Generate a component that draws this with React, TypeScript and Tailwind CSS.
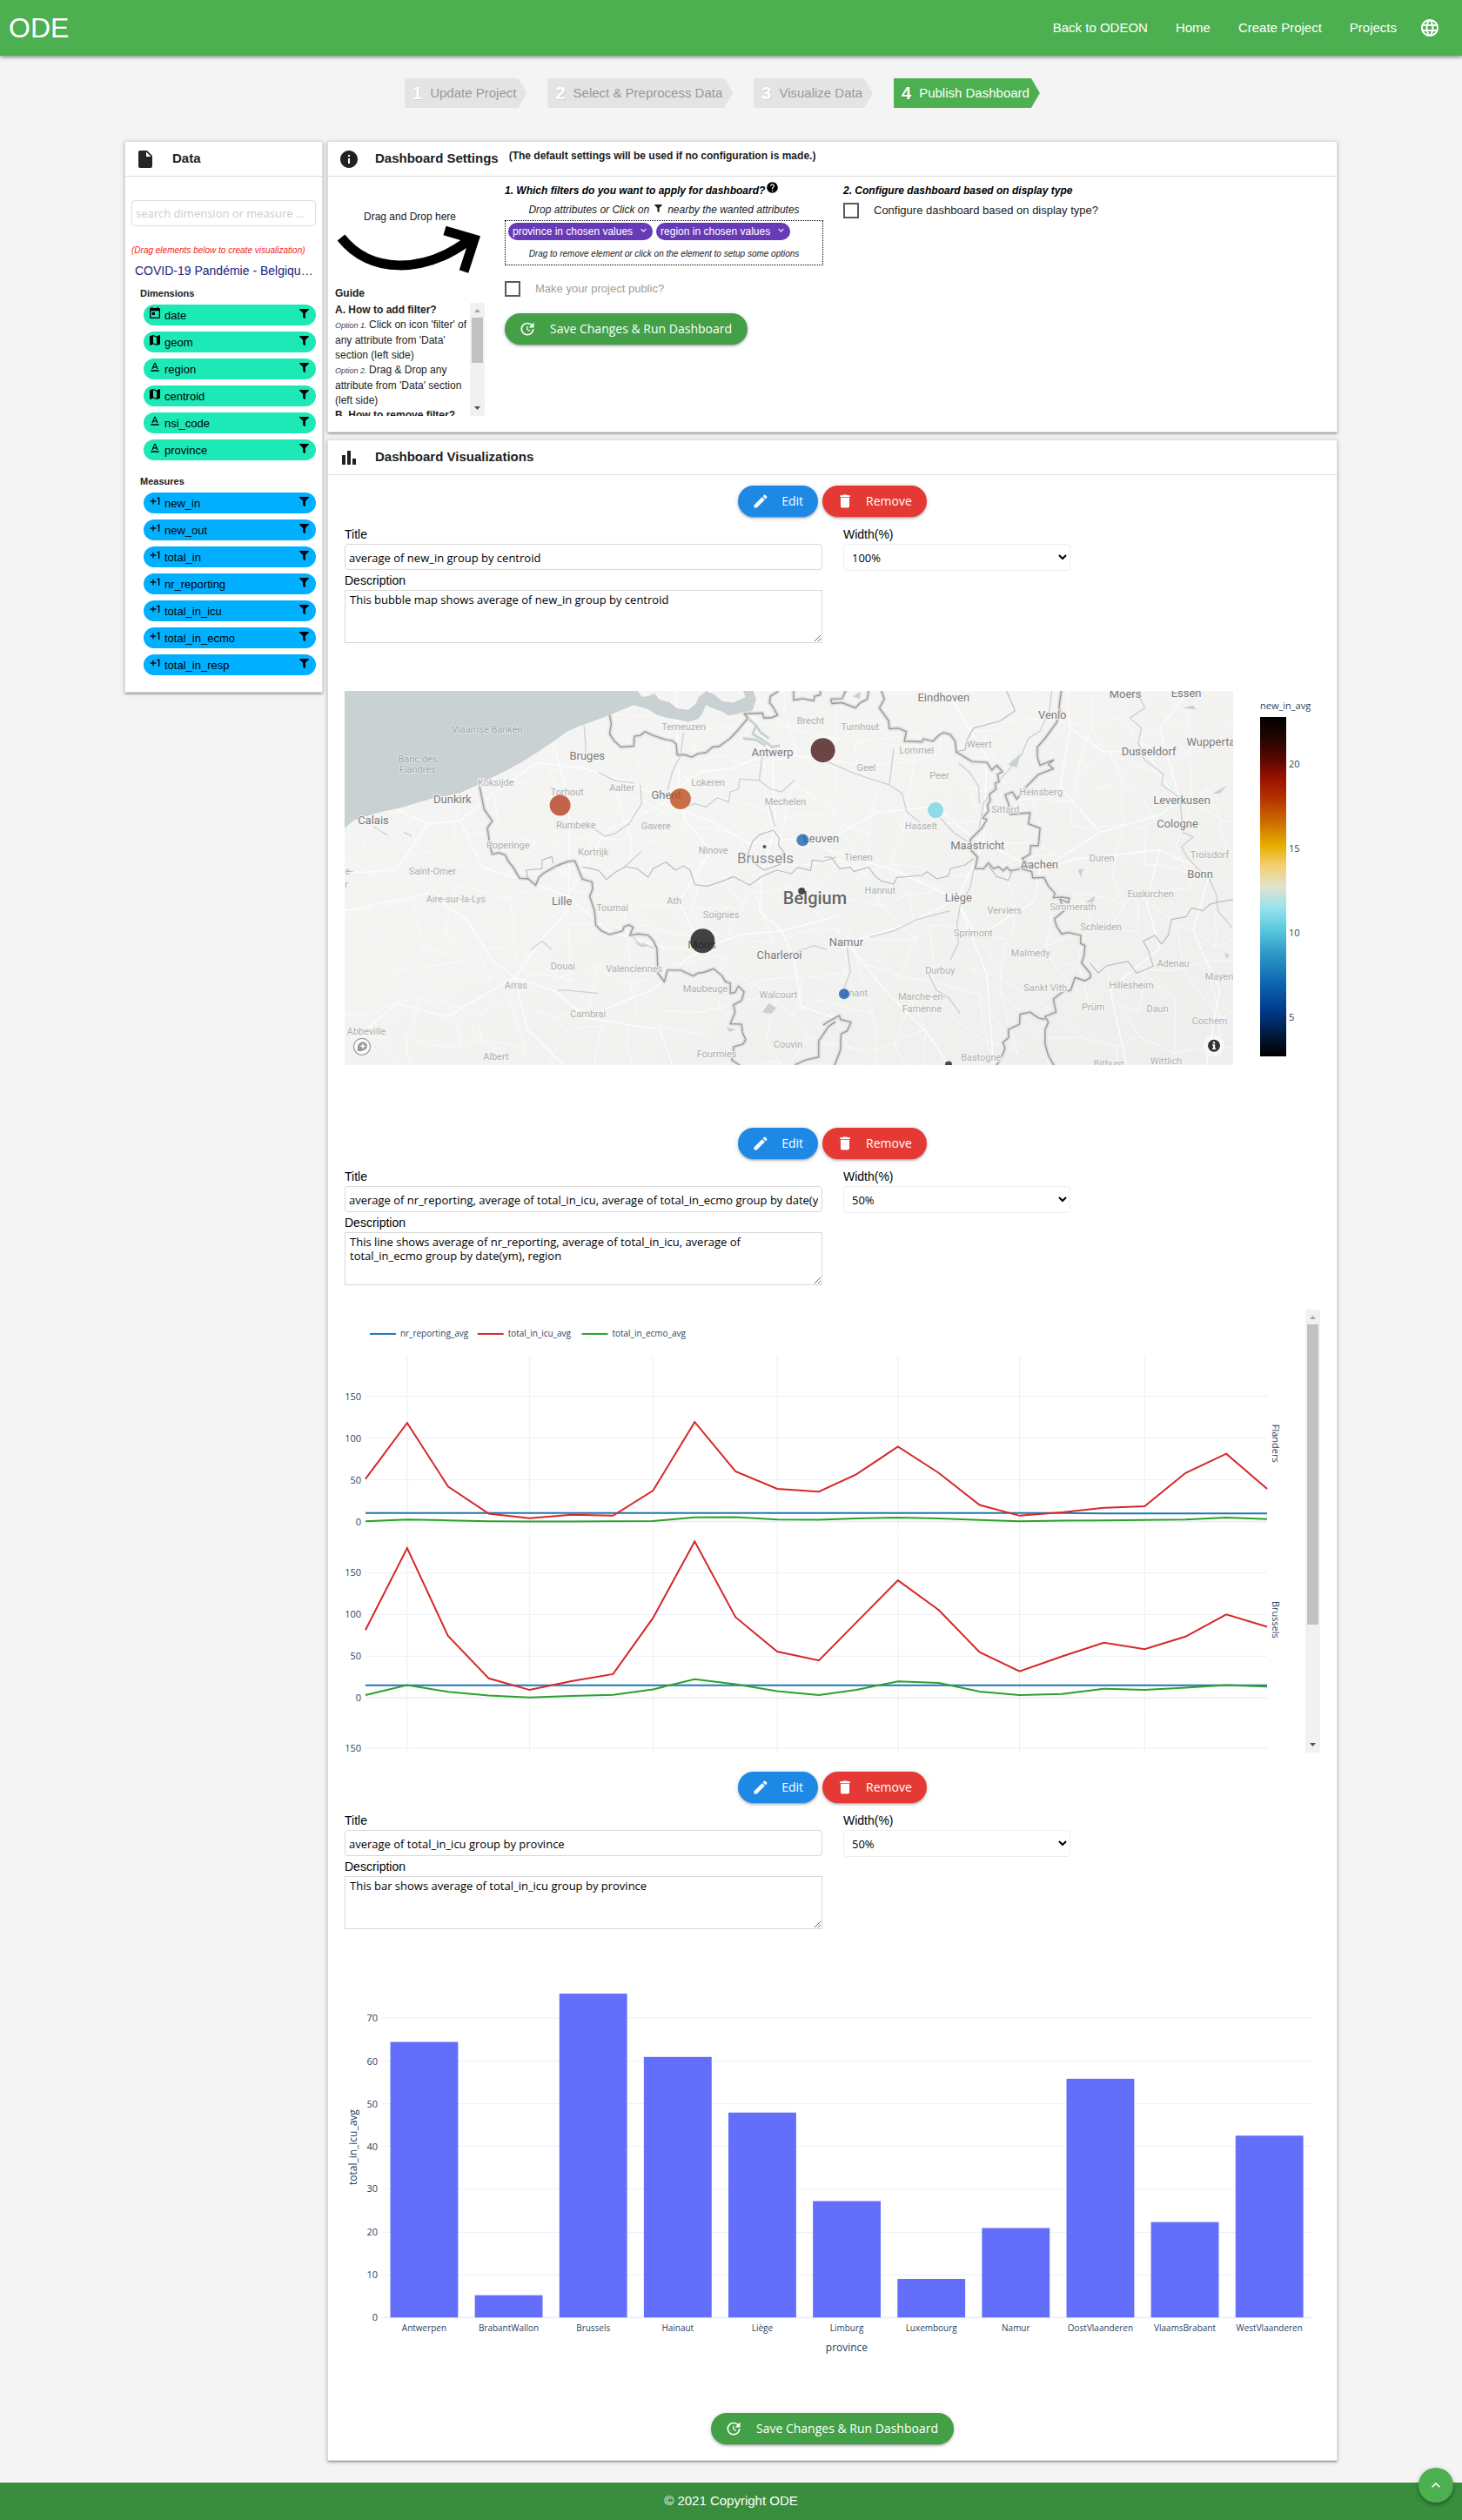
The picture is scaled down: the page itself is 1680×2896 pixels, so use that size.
import React from "react";
import {
  MdLanguage,
  MdInsertDriveFile,
  MdInfo,
  MdBarChart,
  MdToday,
  MdMap,
  MdTextFormat,
  MdExposurePlus1,
  MdHelp,
  MdUpdate,
  MdEdit,
  MdDelete,
  MdKeyboardArrowDown,
  MdKeyboardArrowUp,
} from "react-icons/md";
import { FaFilter } from "react-icons/fa";

type Point = [number, number];

const CARD =
  "border border-[#dddddd] bg-white shadow-[0_2px_2px_0_rgba(0,0,0,0.14),0_3px_1px_-2px_rgba(0,0,0,0.12),0_1px_5px_0_rgba(0,0,0,0.2)]";
const BUTTON =
  "flex h-9 items-center rounded-full font-['Open_Sans',sans-serif] text-sm text-white shadow-[0_2px_2px_0_rgba(0,0,0,0.14),0_3px_1px_-2px_rgba(0,0,0,0.12),0_1px_5px_0_rgba(0,0,0,0.2)]";

/* ---------- page chrome ---------- */

function Header() {
  return (
    <header className="flex h-16 items-center justify-between bg-[#4caf50] pr-[25px] pl-[10px] text-white shadow-[0_2px_4px_0_rgba(0,0,0,0.4)]">
      <a href="#" className="text-[32px] leading-none">
        ODE
      </a>
      <nav className="flex items-center gap-8 text-[15px]">
        <a href="#">Back to ODEON</a>
        <a href="#">Home</a>
        <a href="#">Create Project</a>
        <a href="#">Projects</a>
        <button type="button" aria-label="Language" className="-ml-[6px]">
          <MdLanguage size={24} />
        </button>
      </nav>
    </header>
  );
}

const STEPS = ["Update Project", "Select & Preprocess Data", "Visualize Data", "Publish Dashboard"];

function Steps() {
  return (
    <ol className="mt-[26px] flex justify-center gap-6 pr-5">
      {STEPS.map((label, i) => {
        const active = i === STEPS.length - 1;
        return (
          <li key={label}>
            <a
              href="#"
              className={
                "flex h-[34px] items-center pr-3 pl-[9px] text-[15px] [clip-path:polygon(0_0,calc(100%-10px)_0,100%_50%,calc(100%-10px)_100%,0_100%)] " +
                (active ? "bg-[#4caf50] text-white" : "bg-[#e4e4e4] text-[#999999]")
              }
            >
              <span className="mr-[9px] text-xl font-bold text-white [text-shadow:1px_1px_0_rgba(0,0,0,0.12)]">
                {i + 1}
              </span>
              {label}
            </a>
          </li>
        );
      })}
    </ol>
  );
}

/* ---------- data sidebar ---------- */

const DIMENSIONS = [
  { name: "date", Icon: MdToday },
  { name: "geom", Icon: MdMap },
  { name: "region", Icon: MdTextFormat },
  { name: "centroid", Icon: MdMap },
  { name: "nsi_code", Icon: MdTextFormat },
  { name: "province", Icon: MdTextFormat },
];
const MEASURES = [
  "new_in",
  "new_out",
  "total_in",
  "nr_reporting",
  "total_in_icu",
  "total_in_ecmo",
  "total_in_resp",
].map((name) => ({ name, Icon: MdExposurePlus1 }));

function Field({ name, Icon, color }: { name: string; Icon: React.ElementType; color: string }) {
  return (
    <li className={"flex h-6 items-start rounded-full pr-2 pl-[5px] text-[13px] text-black " + color}>
      <Icon size={16} className="mt-[2px]" />
      <span className="ml-[3px] flex-1 pt-[5px] leading-4">{name}</span>
      <button type="button" aria-label={"Filter on " + name} className="pt-[5px]">
        <FaFilter size={11} />
      </button>
    </li>
  );
}

function Sidebar() {
  return (
    <aside className={CARD + " pb-[19px]"}>
      <div className="flex h-10 items-center border-b border-[#dddddd] pl-[11px]">
        <MdInsertDriveFile size={24} className="text-[#262626]" />
        <h2 className="ml-[19px] text-[15px] font-bold">Data</h2>
      </div>
      <div className="px-[7px] pt-[27px]">
        <input
          type="text"
          aria-label="Search dimension or measure"
          placeholder="search dimension or measure ..."
          className="h-[30px] w-full rounded border border-[#dddddd] px-1 font-['Open_Sans',sans-serif] text-[13px] placeholder:text-[#cccccc]"
        />
        <p className="mt-5 text-[10px] leading-4 whitespace-nowrap text-[#f52525] italic">
          (Drag elements below to create visualization)
        </p>
        <p className="mt-[5px] truncate pl-1 text-sm leading-5 text-[#1a237e]">
          COVID-19 Pandémie - Belgique par province
        </p>
        <h3 className="mt-2 pl-[10px] text-[11px] leading-4 font-bold">Dimensions</h3>
        <ul className="mt-[5px] flex flex-col gap-[7px] pl-[14px]">
          {DIMENSIONS.map((f) => (
            <Field key={f.name} {...f} color="bg-[#1de9b6]" />
          ))}
        </ul>
        <h3 className="mt-4 pl-[10px] text-[11px] leading-4 font-bold">Measures</h3>
        <ul className="mt-[5px] flex flex-col gap-[7px] pl-[14px]">
          {MEASURES.map((f) => (
            <Field key={f.name} {...f} color="bg-[#00b0ff]" />
          ))}
        </ul>
      </div>
    </aside>
  );
}

/* ---------- dashboard settings ---------- */

function ScrollBar({ thumb }: { thumb: string }) {
  return (
    <div aria-hidden="true" className="flex w-[17px] shrink-0 flex-col items-center bg-[#f1f1f1]">
      <svg width="17" height="17" viewBox="0 0 17 17" fill="#a3a3a3">
        <path d="M5 11h7L8.500 7z" />
      </svg>
      <div className={"w-[13px] bg-[#c1c1c1] " + thumb} />
      <svg width="17" height="17" viewBox="0 0 17 17" fill="#505050" className="mt-auto">
        <path d="M5 6h7l-3.500 4z" />
      </svg>
    </div>
  );
}

function SaveButton() {
  return (
    <button type="button" className={BUTTON + " bg-[#43a047] pr-[18px] pl-4"}>
      <MdUpdate size={20} className="mr-4" />
      Save Changes &amp; Run Dashboard
    </button>
  );
}

function FilterChip({ children }: { children: React.ReactNode }) {
  return (
    <button
      type="button"
      className="flex h-5 items-center rounded-full bg-[#673ab7] pr-1 pl-[5px] text-xs whitespace-nowrap text-white"
    >
      {children}
      <MdKeyboardArrowDown size={13} className="mb-1 ml-[6px]" />
    </button>
  );
}

function CheckField({ id, label, tone }: { id: string; label: string; tone: string }) {
  return (
    <div className="flex items-center">
      <input
        id={id}
        type="checkbox"
        className="h-[18px] w-[18px] appearance-none border-2 border-[#5a5a5a] bg-white"
      />
      <label htmlFor={id} className={"pl-[17px] text-[13px] leading-[18px] " + tone}>
        {label}
      </label>
    </div>
  );
}

function Option({ n }: { n: number }) {
  return <i className="text-[9px] text-[#444444]">Option {n}. </i>;
}

function Settings() {
  return (
    <section className={CARD + " pb-[18px]"}>
      <div className="flex h-10 items-center border-b border-[#dddddd] pl-3">
        <MdInfo size={24} className="text-[#212121]" />
        <h2 className="ml-[18px] text-[15px] font-bold">Dashboard Settings</h2>
        <p className="ml-3 pb-2 text-xs font-bold">
          (The default settings will be used if no configuration is made.)
        </p>
      </div>
      <div className="grid grid-cols-[172px_366px_1fr] gap-[23px] pl-2">
        <div className="pt-[38px]">
          <p className="text-center text-xs leading-4">Drag and Drop here</p>
          <svg viewBox="0 0 172 57" className="mt-px block w-full" fill="none" stroke="#000" strokeWidth="11">
            <path d="M7 15C40 57 102 57 154 18" />
            <path d="M126 7L160 17L148 54" />
          </svg>
          <h3 className="mt-3 text-xs leading-5 font-bold">Guide</h3>
          <div className="mt-px flex h-[130px]">
            <div className="flex-1 overflow-hidden text-xs leading-[17px] text-[#222222]">
              <p className="font-bold">A. How to add filter?</p>
              <p>
                <Option n={1} />
                Click on icon &apos;filter&apos; of any attribute from &apos;Data&apos; section (left side)
              </p>
              <p>
                <Option n={2} />
                Drag &amp; Drop any attribute from &apos;Data&apos; section (left side)
              </p>
              <p className="font-bold">B. How to remove filter?</p>
            </div>
            <ScrollBar thumb="h-[52px]" />
          </div>
        </div>

        <div className="pt-2">
          <h3 className="flex h-4 items-center text-xs leading-4 font-bold whitespace-nowrap text-black italic">
            1. Which filters do you want to apply for dashboard?
            <MdHelp size={15} className="mb-2 ml-px shrink-0" />
          </h3>
          <p className="mt-[6px] flex items-center justify-center text-xs leading-4 italic">
            Drop attributes or Click on
            <FaFilter size={9} className="mx-[6px] mb-[3px]" />
            nearby the wanted attributes
          </p>
          <div className="mt-1 border border-dotted border-black px-[3px] pt-[2px] pb-1">
            <div className="flex gap-1">
              <FilterChip>province in chosen values</FilterChip>
              <FilterChip>region in chosen values</FilterChip>
            </div>
            <p className="mt-2 text-center text-[10px] leading-4 italic">
              Drag to remove element or click on the element to setup some options
            </p>
          </div>
          <div className="mt-[18px]">
            <CheckField id="public" label="Make your project public?" tone="text-[#9e9e9e]" />
          </div>
          <div className="mt-[19px] flex">
            <SaveButton />
          </div>
        </div>

        <div className="pt-2">
          <h3 className="mb-[6px] text-xs leading-4 font-bold text-black italic">
            2. Configure dashboard based on display type
          </h3>
          <CheckField
            id="by-display"
            label="Configure dashboard based on display type?"
            tone="text-[#222222]"
          />
        </div>
      </div>
    </section>
  );
}

/* ---------- visualization form ---------- */

function VizForm({
  id,
  title,
  width,
  description,
}: {
  id: string;
  title: string;
  width: string;
  description: string;
}) {
  const label = "block text-sm leading-[22px] text-black";
  return (
    <div>
      <div className="flex justify-center gap-[5px]">
        <button type="button" className={BUTTON + " bg-[#1e88e5] pr-[17px] pl-4"}>
          <MdEdit size={20} className="mr-[14px]" />
          Edit
        </button>
        <button type="button" className={BUTTON + " bg-[#e53935] pr-[17px] pl-4"}>
          <MdDelete size={20} className="mr-[14px]" />
          Remove
        </button>
      </div>
      <div className="mt-[9px] grid grid-cols-[550fr_262fr_263fr] gap-6">
        <div>
          <label htmlFor={id + "-title"} className={label}>
            Title
          </label>
          <input
            id={id + "-title"}
            type="text"
            defaultValue={title}
            className="block h-[30px] w-full rounded border border-[#d8d8d8] px-1 pt-[2px] font-['Open_Sans',sans-serif] text-[13px] text-black"
          />
          <label htmlFor={id + "-desc"} className={label + " mt-px"}>
            Description
          </label>
          <textarea
            id={id + "-desc"}
            defaultValue={description}
            className="block h-[61px] w-full resize border border-[#d8d8d8] py-[2px] pr-4 pl-[5px] font-['Open_Sans',sans-serif] text-[13px] leading-4 text-black"
          />
        </div>
        <div>
          <label htmlFor={id + "-width"} className={label}>
            Width(%)
          </label>
          <select
            id={id + "-width"}
            defaultValue={width}
            className="block h-[31px] w-full rounded-sm border border-[#eeeeee] bg-white px-[5px] font-['Open_Sans',sans-serif] text-[13px] text-black"
          >
            <option>50%</option>
            <option>100%</option>
          </select>
        </div>
      </div>
    </div>
  );
}

/* ---------- bubble map ---------- */

/* The map geometry is kept on two sheets, west and east, each with its own grid. */
const west = (x: number, y: number): Point => [(x - 41) / 2.703, (y - 72) / 3];
const east = (x: number, y: number): Point => [555 + x / 2.613, (y - 72) / 3];
const WEST = "matrix(0.36996 0 0 0.33333 -15.168 -24)";
const EAST = "matrix(0.3827 0 0 0.33333 555 -24)";

const SEA =
  "M30 60H948L965 90L985 88L1005 78L1020 100L1050 108L1075 130L1110 135L1132 115L1140 92L1165 70L1190 82L1215 105L1250 110L1285 92L1275 60H1310L1322 100L1310 142L1280 147L1255 155L1235 158L1215 145L1190 135L1165 122L1155 150L1140 170L1110 180L1075 172L1040 165L1010 155L985 137L940 122L900 140L865 157L820 175L770 195L730 215L700 240L640 285L590 320L540 350L500 372L455 397L440 405L400 425L360 435L320 442L280 455L220 475L150 492L110 505L70 520L50 538L30 560Z";

const WEST_BORDERS = [
  "865,155 870,185 865,220 880,245 900,265 940,262 942,228 960,225 975,212 1000,225 1040,240 1060,243 1072,255 1075,292 1100,292 1120,300 1140,288 1165,284 1185,265 1205,263 1240,235 1265,205 1295,165 1283,150 1340,148 1345,165 1370,163 1387,155 1372,125 1362,112 1365,90 1390,72",
  "1437,60 1437,103 1465,98 1500,105 1502,90 1520,85 1520,60",
  "460,398 475,480 500,520 485,545 492,600 500,635 520,630 540,637 550,660 565,680 585,718 612,720 635,742 645,715 660,700 700,675 735,660 757,658 780,720 792,725 810,730 812,755 803,780 818,830 822,880 840,900 865,912 905,900 910,885 925,879 938,887 928,915 955,910 985,915 1000,932 1012,960 1015,1045 1035,1075 1045,1035 1085,1035 1125,1055 1140,1045 1160,1042 1188,1030 1215,1055 1225,1075 1240,1080 1240,1115 1255,1112 1265,1090 1283,1110 1275,1140 1250,1155 1255,1180 1240,1220 1275,1222 1278,1250 1288,1275 1280,1290 1250,1300 1250,1320 1245,1345 1275,1368",
  "1440,1362 1475,1345 1515,1335 1515,1280 1545,1230 1568,1212",
];
const EAST_BORDERS = [
  "-12,1225 0,1215 37,1192 40,1205 72,1215 60,1245 42,1255 40,1310 20,1370",
  "10,100 15,115 45,112 85,130 100,112 120,100 127,60 M10,100 45,98 60,60",
  "160,60 172,100 157,130 185,175 187,202 215,200 238,212 232,245 285,247 290,237 318,245 335,225 350,215 370,222 385,245 388,282 435,315 480,318 495,345 510,328 527,350 512,360 517,385 505,390 508,410 488,428 490,450 482,465 485,485 468,510 480,515 465,545 430,585 432,620 452,645 445,685 470,685 485,665 500,685 515,678 530,692 540,680 550,692 583,685 607,675 587,650 610,635 612,605 635,605 640,545 605,530 610,492 550,497 545,460 535,430 557,420 570,445 600,400 635,360 680,340 665,325 680,310 640,328 632,300 632,265 655,235 690,180 700,140 697,128 705,60",
  "583,685 615,695 618,717 652,715 665,745 685,770 680,785 705,783 728,787 725,802 700,790 712,830 683,858 690,885 705,910 725,905 762,915 762,943 775,950 772,985 765,1010 790,1045 792,1060 775,1072 745,1060 732,1105 710,1108 680,1135 688,1180 655,1195 665,1215 655,1240 655,1290 665,1330 685,1370",
  "655,1205 635,1200 610,1180 580,1187 578,1222 545,1240 545,1268 528,1285 535,1305 520,1345 505,1370",
];
const WEST_REGIONS = [
  "780,680 800,682 832,692 855,722 885,695 915,678 950,685 985,715 1000,685 1040,662 1070,690 1095,675 1115,690 1130,740 1170,745 1215,728 1250,712 1300,742 1340,710 1385,690 1430,702 1450,680 1490,692 1495,655 1530,660 1568,645",
  "1295,632 1310,590 1330,568 1375,552 1392,580 1390,605 1405,625 1395,670 1345,690 1320,670 Z",
  "612,720 605,690 655,685 655,655 685,643 690,668",
];
const EAST_REGIONS = [
  "-8,645 12,645 38,685 70,680 80,695 125,680 145,712 165,728 200,738 210,715 285,708 300,695 330,720 365,710 370,685 415,672 440,650",
  "790,1010 815,1045 840,1020 880,1010 905,1005 930,1045 980,1022 965,965 950,935 985,915 1005,945 1025,915 1035,860 1080,850 1095,820 1130,830 1150,808 1175,800 1230,790",
  "535,60 565,140 520,175 440,200 420,240 415,275 388,280",
  "485,675 510,712 545,725 557,690",
];
const WEST_RIVERS = [
  "785,190 790,250 792,310",
  "1095,215 1085,295 1060,350 1045,415",
  "960,395 965,460 925,530 880,565 850,572 820,550",
  "1105,470 1130,460 1165,472 1200,440 1235,455 1240,420 1265,410 1270,375 1330,380 1340,290 1380,275",
  "1330,380 1365,410 1400,420 1440,380",
  "1360,460 1380,540",
  "830,352 880,380 940,390",
  "130,540 175,570 M225,560 250,572",
  "965,625 935,655 905,685",
  "935,920 960,945 M965,940 1000,960",
  "1450,970 1500,950 1540,965",
  "705,1105 740,1105 830,1115",
  "620,965 655,935 685,965",
];
const EAST_RIVERS = [
  "0,315 70,350 130,375 187,395 225,425 240,490 280,525",
  "187,395 195,320 200,270",
  "395,320 430,355 455,400 458,460",
  "675,72 668,140 640,210 605,235 585,290 545,345 510,390 470,460 455,560",
  "940,95 955,130 910,165 945,200 935,250 955,310 985,335 1010,360 1005,395 1060,440 1065,500 1070,560 1100,575 1065,610 1085,650 1110,680 1145,710 1170,775 1175,830 1218,890",
  "130,920 200,900 270,860 370,830",
  "440,690 430,750 400,810 390,880 395,940 370,1000",
  "340,510 380,560 420,590",
  "60,960 70,1040 50,1100",
  "305,1050 330,1105 365,1130 400,1185",
];
const WEST_ROADS = [
  "41,700 200,690 300,530 400,520 520,410 640,320 790,340 900,380 1030,440 1150,350 1240,340 1380,280 1568,320",
  "400,520 470,680 640,740 735,780 860,900 1040,960 1155,960 1280,910 1400,900 1568,850",
  "110,1240 200,1150 360,1195 570,1060 660,920 735,830 740,660 738,440 690,260",
  "735,780 850,560 1030,460 1180,520 1300,600 1460,580 1568,590",
  "1340,690 1380,540 1370,290 1300,140",
  "1340,690 1330,830 1400,900 1440,1000 1460,1160 1568,1200",
  "570,1060 700,1110 790,1200 1000,1100 1100,1000 1155,960",
  "570,1060 610,1240 720,1361 M790,1200 1020,1240 1060,1361",
  "41,830 300,770 420,860 500,1000 570,1060 M300,530 200,480",
  "1070,72 1080,400 1100,520 1180,620 1080,800 1155,960",
];
const EAST_ROADS = [
  "0,590 150,490 325,470 440,580 640,690 820,560 1000,500 1060,450 1000,200 1080,80",
  "0,620 200,690 390,790 450,920 620,800 640,690 750,650 1000,620 1150,700",
  "60,940 230,880 390,790 470,600 480,300 360,72",
  "60,940 170,1100 300,1250 365,1361 M390,790 480,1050 500,1361",
  "720,72 730,200 830,280 960,280 1050,450 M730,200 700,400 820,560",
  "1000,620 960,800 1000,960 850,1100 900,1361 M1150,700 1100,900 1180,1100 1140,1361",
];

const pathOf = (s: string) => "M" + s.trim();

/* Minor roads: a jittered lattice of short links. */
function minorRoads() {
  let seed = 11;
  const rnd = () => {
    seed = (seed * 16807) % 2147483647;
    return seed / 2147483647;
  };
  const cols = 27;
  const rows = 12;
  const nodes: Point[][] = [];
  for (let r = 0; r <= rows; r++) {
    const row: Point[] = [];
    for (let c = 0; c <= cols; c++) row.push([c * 40 - 14 + rnd() * 34, r * 40 - 16 + rnd() * 34]);
    nodes.push(row);
  }
  let d = "";
  const link = (a: Point, b: Point) => {
    const mx = (a[0] + b[0]) / 2 + (rnd() - 0.5) * 14;
    const my = (a[1] + b[1]) / 2 + (rnd() - 0.5) * 14;
    d += `M${a[0].toFixed(0)} ${a[1].toFixed(0)}Q${mx.toFixed(0)} ${my.toFixed(0)} ${b[0].toFixed(0)} ${b[1].toFixed(0)}`;
  };
  for (let r = 0; r < rows; r++)
    for (let c = 0; c < cols; c++) {
      const a = nodes[r][c];
      if (rnd() < 0.7) link(a, nodes[r][c + 1]);
      if (rnd() < 0.6) link(a, nodes[r + 1][c]);
      if (rnd() < 0.3) link(a, nodes[r + 1][c + 1]);
    }
  return d;
}
const MINOR_ROADS = minorRoads();

type Place = [string, number, number];
const WEST_TOWNS: Place[] = [
  ["Terneuzen", 1096, 194],
  ["Brecht", 1490, 173],
  ["Koksijde", 510, 386],
  ["Torhout", 733, 421],
  ["Aalter", 903, 405],
  ["Lokeren", 1170, 387],
  ["Rumbeke", 759, 535],
  ["Gavere", 1008, 538],
  ["Mechelen", 1411, 453],
  ["Poperinge", 549, 603],
  ["Kortrijk", 813, 627],
  ["Ninove", 1187, 620],
  ["Saint-Omer", 315, 692],
  ["Aire-sur-la-Lys", 387, 790],
  ["Tournai", 873, 818],
  ["Ath", 1065, 796],
  ["Soignies", 1211, 843],
  ["Douai", 720, 1020],
  ["Valenciennes", 941, 1029],
  ["Maubeuge", 1162, 1099],
  ["Arras", 573, 1087],
  ["Cambrai", 798, 1186],
  ["Walcourt", 1389, 1120],
  ["Couvin", 1419, 1291],
  ["Fourmies", 1198, 1322],
  ["Abbeville", 109, 1246],
  ["Albert", 510, 1332],
  ["e-", 54, 692],
  ["r", 47, 737],
];
const EAST_TOWNS: Place[] = [
  ["Turnhout", 98, 195],
  ["Lommel", 268, 277],
  ["Weert", 458, 256],
  ["Geel", 117, 337],
  ["Peer", 338, 362],
  ["Heinsberg", 644, 421],
  ["Sittard", 535, 480],
  ["Hasselt", 283, 538],
  ["Tienen", 93, 646],
  ["Duren", 827, 648],
  ["Troisdorf", 1149, 637],
  ["Hannut", 160, 760],
  ["Euskirchen", 972, 770],
  ["Verviers", 532, 829],
  ["Simmerath", 740, 817],
  ["Schleiden", 824, 884],
  ["Sprimont", 438, 907],
  ["Malmedy", 611, 974],
  ["Adenau", 1040, 1010],
  ["Durbuy", 339, 1035],
  ["Mayen", 1178, 1056],
  ["Hillesheim", 914, 1087],
  ["Sankt Vith", 657, 1096],
  ["Dinant", 81, 1114],
  ["Marche-en-", 285, 1125],
  ["Famenne", 285, 1166],
  ["Prüm", 799, 1160],
  ["Daun", 993, 1168],
  ["Cochem", 1151, 1210],
  ["Bastogne", 463, 1336],
  ["Bitburg", 847, 1356],
  ["Wittlich", 1020, 1347],
];
const WEST_CITIES: Place[] = [
  ["Bruges", 794, 296],
  ["Antwerp", 1371, 286],
  ["Ghent", 1040, 431],
  ["Dunkirk", 377, 446],
  ["Calais", 129, 520],
  ["Leuven", 1521, 582],
  ["Lille", 718, 797],
  ["Mons", 1152, 948],
  ["Charleroi", 1393, 985],
];
const EAST_CITIES: Place[] = [
  ["Eindhoven", 350, 95],
  ["Moers", 897, 84],
  ["Essen", 1078, 80],
  ["Venlo", 678, 155],
  ["Wuppertal", 1157, 248],
  ["Dusseldorf", 968, 281],
  ["Leverkusen", 1067, 449],
  ["Cologne", 1054, 531],
  ["Maastricht", 451, 607],
  ["Aachen", 637, 672],
  ["Bonn", 1121, 706],
  ["Liège", 395, 785],
  ["Namur", 58, 938],
];

function Labels({ places, project }: { places: Place[]; project: (x: number, y: number) => Point }) {
  return (
    <>
      {places.map(([name, x, y]) => {
        const [px, py] = project(x, y);
        return (
          <text key={name} x={Math.round(px)} y={Math.round(py) + 4}>
            {name}
          </text>
        );
      })}
    </>
  );
}

function Lines({ list }: { list: string[] }) {
  return (
    <>
      {list.map((s) => (
        <path key={s} d={pathOf(s)} vectorEffect="non-scaling-stroke" />
      ))}
    </>
  );
}

const BUBBLES: { at: Point; r: number; fill: string }[] = [
  { at: west(711, 466), r: 12, fill: "#b43b1c" },
  { at: west(1085, 444), r: 12, fill: "#bb4817" },
  { at: west(1154, 934), r: 14, fill: "#101010" },
  { at: west(1465, 586), r: 7, fill: "#1762b4" },
  { at: west(1462, 762), r: 4, fill: "#111318" },
  { at: west(1528, 276), r: 14, fill: "#431313" },
  { at: east(326, 483), r: 9, fill: "#71d5e4" },
  { at: east(51, 1117), r: 6, fill: "#1457ae" },
  { at: east(365, 1361), r: 4, fill: "#101828" },
];

function BubbleMap() {
  return (
    <svg
      viewBox="0 0 1022 430"
      className="block min-w-0 flex-1 font-['Roboto',sans-serif]"
      role="img"
      aria-label="Bubble map of new_in_avg by centroid"
    >
      <defs>
        <linearGradient id="relief" x1="0" y1="0" x2="1" y2="1">
          <stop offset="0.4" stopColor="#f4f4f2" />
          <stop offset="1" stopColor="#eeeeed" />
        </linearGradient>
      </defs>
      <rect width="1022" height="430" fill="url(#relief)" />
      <g fill="none" stroke="#fdfdfd">
        <path d={MINOR_ROADS} strokeWidth="0.800" />
        <g strokeWidth="1.400">
          <g transform={WEST}>
            <Lines list={WEST_ROADS} />
          </g>
          <g transform={EAST}>
            <Lines list={EAST_ROADS} />
          </g>
        </g>
      </g>
      <g fill="none" stroke="#c9d1d3" strokeWidth="1.300">
        <g transform={WEST}>
          <path d={SEA} fill="#c9d1d3" stroke="#fafafa" vectorEffect="non-scaling-stroke" strokeWidth="1" />
          <path
            d="M1290 160L1320 190L1310 220L1340 240L1370 265L1395 260M1280 235L1320 240L1350 260M1320 190L1335 215L1360 235"
            strokeWidth="3"
            vectorEffect="non-scaling-stroke"
          />
          <path d="M1340 1180L1360 1150L1382 1165L1368 1185ZM1228 1232L1255 1240L1238 1248ZM945 942L985 950L965 955Z" fill="#c9d1d3" />
          <Lines list={WEST_RIVERS} />
        </g>
        <g transform={EAST}>
          <path
            d="M78 90L100 75L98 98ZM545 325L580 290L570 335ZM755 690L770 685L762 712ZM778 800L805 780L800 800ZM1160 425L1200 400L1180 425ZM1072 130L1100 122L1108 135ZM1195 975L1210 985L1200 993Z"
            fill="#c9d1d3"
          />
          <Lines list={EAST_RIVERS} />
        </g>
      </g>
      <g fill="none" strokeLinejoin="round">
        <g transform={WEST} stroke="#e3e3e3" strokeWidth="5">
          <Lines list={WEST_BORDERS} />
        </g>
        <g transform={EAST} stroke="#e3e3e3" strokeWidth="5">
          <Lines list={EAST_BORDERS} />
        </g>
        <g transform={WEST} stroke="#bdbdbd" strokeWidth="1.200">
          <Lines list={WEST_REGIONS} />
        </g>
        <g transform={EAST} stroke="#bdbdbd" strokeWidth="1.200">
          <Lines list={EAST_REGIONS} />
        </g>
        <g transform={WEST} stroke="#9a9a9a" strokeWidth="1.400">
          <Lines list={WEST_BORDERS} />
        </g>
        <g transform={EAST} stroke="#9a9a9a" strokeWidth="1.400">
          <Lines list={EAST_BORDERS} />
        </g>
      </g>
      <g textAnchor="middle" stroke="#f5f5f4" strokeWidth="2" strokeLinejoin="round" paintOrder="stroke">
        <g fontSize="11" fill="#b0b0b0">
          <Labels places={WEST_TOWNS} project={west} />
          <Labels places={EAST_TOWNS} project={east} />
        </g>
        <g fontSize="11" fill="#9fa3a5" stroke="#dfe4e5">
          <text x="164" y="48">Vlaamse Banken</text>
          <text x="84" y="82">Banc des</text>
          <text x="84" y="94">Flandres</text>
        </g>
        <g fontSize="13" fill="#7b7b7b">
          <Labels places={WEST_CITIES} project={west} />
          <Labels places={EAST_CITIES} project={east} />
        </g>
        <text x="484" y="198" fontSize="17" fill="#8c8c8c">
          Brussels
        </text>
        <text x="541" y="245" fontSize="20" fontWeight="500" fill="#666666">
          Belgium
        </text>
      </g>
      <circle cx="483" cy="179" r="2" fill="#555" />
      <g fillOpacity="0.78">
        {BUBBLES.map((b) => (
          <circle key={b.fill} cx={b.at[0]} cy={b.at[1]} r={b.r} fill={b.fill} />
        ))}
      </g>
      <g transform="translate(20 409)">
        <circle r="9.500" fill="#fff" stroke="#999" strokeWidth="1.200" />
        <path d="M-5 5C-6-1-4-5 1-5.500A5 5 0 0 1 1 4.500C-1 5.500-3 5.500-5 5Z" fill="#999" />
        <path d="M1-4L2-1.500L4.500-0.500L2 0.500L1 3L0 0.500L-2.500-0.500L0-1.500Z" fill="#fff" />
      </g>
      <g transform="translate(1000 408)">
        <circle r="12" fill="#f8f8f8" />
        <circle r="7" fill="#333" />
        <path d="M-1.200-4.500h2.400v2h-2.400zM-2-1.500h3.200v4.500h1v1.200h-4.200v-1.200h1v-3.300h-1z" fill="#fff" />
      </g>
    </svg>
  );
}

const SCALE: [number, string][] = [
  [0, "#000000"],
  [0.06, "#200602"],
  [0.12, "#560700"],
  [0.18, "#971200"],
  [0.24, "#b53200"],
  [0.31, "#cc6d00"],
  [0.38, "#e6b000"],
  [0.44, "#f3d072"],
  [0.5, "#e0e3cc"],
  [0.56, "#9ae3ec"],
  [0.63, "#56c6dc"],
  [0.7, "#2c97c4"],
  [0.79, "#0c62b2"],
  [0.87, "#003788"],
  [0.94, "#001838"],
  [1, "#000000"],
];

function ColorBar() {
  return (
    <svg
      width="100"
      height="430"
      viewBox="0 0 100 430"
      className="shrink-0 font-['Open_Sans',sans-serif]"
      fontSize="11"
      fill="#2a3f5f"
    >
      <defs>
        <linearGradient id="scale" x1="0" y1="0" x2="0" y2="1">
          {SCALE.map(([o, c]) => (
            <stop key={o} offset={o} stopColor={c} />
          ))}
        </linearGradient>
      </defs>
      <text x="31" y="21">new_in_avg</text>
      <rect x="31" y="30" width="30" height="390" fill="url(#scale)" />
      <text x="64" y="88">20</text>
      <text x="64" y="185">15</text>
      <text x="64" y="282">10</text>
      <text x="64" y="379">5</text>
    </svg>
  );
}

/* ---------- line chart ---------- */

const MONTH_X = [
  24, 72, 119, 166, 213, 261, 309, 355, 403, 450, 498, 546, 589, 637, 684, 731, 777, 826, 874, 921,
  968, 1015, 1062,
];
const MONTH_GRID = [72, 213, 355, 498, 637, 777, 921];
const REGIONS = [
  {
    name: "Flanders",
    zero: 244,
    nr: [10.2, 10.2, 10.2, 10.2, 10.2, 10.2, 10.2, 10.2, 10.2, 10.2, 10.2, 10.2, 10.2, 10.2, 10.2, 10.2, 10.2, 10.2, 9.8, 9.6, 9.6, 9.6, 9.6],
    icu: [51, 118, 42, 9.5, 4, 8, 7, 37, 119, 60, 39, 35.7, 56.4, 89.5, 58, 19.7, 7, 11, 16.4, 18.2, 58, 81, 39],
    ecmo: [0.4, 2.5, 1.5, 0.4, 0, 0, 0.3, 0.5, 5, 5.2, 2.3, 2.2, 3.7, 4.8, 3.6, 2, 0.4, 1, 1.4, 1.8, 2.3, 4.8, 3],
  },
  {
    name: "Brussels",
    zero: 447,
    nr: Array(23).fill(15) as number[],
    icu: [81, 179, 74, 23.3, 9.5, 20, 28.4, 95.4, 187, 96.5, 55.3, 44.8, 90, 140.5, 105, 54.6, 31.7, 49.5, 66, 58.2, 73.2, 99.7, 85],
    ecmo: [3.3, 15.3, 7.3, 2.9, 0.4, 2.2, 3.6, 10.2, 22.2, 16.4, 8, 3.3, 9.5, 19.7, 17.8, 7.6, 3.3, 4.7, 10.9, 9.5, 12, 15.3, 13.5],
  },
  { name: "Wallonia", zero: 649, nr: [] as number[], icu: [] as number[], ecmo: [] as number[] },
];
const LEGEND = [
  { name: "nr_reporting_avg", x: 29, color: "#1f77b4" },
  { name: "total_in_icu_avg", x: 153, color: "#d62728" },
  { name: "total_in_ecmo_avg", x: 273, color: "#2ca02c" },
];

function Series({ values, zero, color }: { values: number[]; zero: number; color: string }) {
  const points = values.map((v, i) => `${MONTH_X[i]},${(zero - v * 0.963).toFixed(1)}`).join(" ");
  return <polyline points={points} fill="none" stroke={color} strokeWidth="2" />;
}

function LineChart() {
  return (
    <svg
      viewBox="0 0 1106 510"
      className="block min-w-0 flex-1 overflow-hidden font-['Open_Sans',sans-serif]"
      fontSize="11"
      fill="#2a3f5f"
      role="img"
      aria-label="Monthly averages per region"
    >
      {LEGEND.map((l) => (
        <g key={l.name}>
          <path d={`M${l.x} 28h30`} stroke={l.color} strokeWidth="2" />
          <text x={l.x + 35} y="31" fontSize="10">
            {l.name}
          </text>
        </g>
      ))}
      {REGIONS.map((r) => (
        <g key={r.name}>
          {MONTH_GRID.map((x) => (
            <path key={x} d={`M${x} ${r.zero - 190}V${r.zero + 10}`} stroke="#ebeef8" strokeWidth="1" />
          ))}
          {[0, 50, 100, 150].map((v) => {
            const y = Math.round(r.zero - v * 0.963);
            return (
              <g key={v}>
                <path d={`M24 ${y}H1062`} stroke="#ebeef8" strokeWidth={v === 0 ? 2 : 1} />
                <text x="19" y={y + 4} textAnchor="end">
                  {v}
                </text>
              </g>
            );
          })}
          <Series values={r.nr} zero={r.zero} color="#1f77b4" />
          <Series values={r.icu} zero={r.zero} color="#d62728" />
          <Series values={r.ecmo} zero={r.zero} color="#2ca02c" />
          <text transform={`translate(1068 ${r.zero - 90}) rotate(90)`} textAnchor="middle">
            {r.name}
          </text>
        </g>
      ))}
    </svg>
  );
}

/* ---------- bar chart ---------- */

const BARS: [string, number][] = [
  ["Antwerpen", 64.4],
  ["BrabantWallon", 5.2],
  ["Brussels", 75.7],
  ["Hainaut", 60.9],
  ["Liège", 47.9],
  ["Limburg", 27.2],
  ["Luxembourg", 9],
  ["Namur", 20.9],
  ["OostVlaanderen", 55.8],
  ["VlaamsBrabant", 22.3],
  ["WestVlaanderen", 42.5],
];

function BarChart() {
  const zero = 423;
  return (
    <svg
      viewBox="0 0 1123 480"
      className="block w-full font-['Open_Sans',sans-serif]"
      fontSize="11"
      fill="#2a3f5f"
      role="img"
      aria-label="Average of total_in_icu by province"
    >
      {[0, 10, 20, 30, 40, 50, 60, 70].map((v) => {
        const y = Math.round(zero - v * 4.925);
        return (
          <g key={v}>
            <path d={`M43 ${y}H1113`} stroke="#ebf0f8" strokeWidth={v === 0 ? 2 : 1} />
            <text x="38" y={y + 4} textAnchor="end">
              {v}
            </text>
          </g>
        );
      })}
      {BARS.map(([name, v], i) => {
        const mid = 91.6 + i * 97.3;
        return (
          <g key={name}>
            <rect x={mid - 39} y={zero - v * 4.925} width="78" height={v * 4.925} fill="#636efa" />
            <text x={mid} y="439" fontSize="10" textAnchor="middle">
              {name}
            </text>
          </g>
        );
      })}
      <text x="578" y="462" fontSize="12" textAnchor="middle">
        province
      </text>
      <text transform="translate(14 227) rotate(-90)" fontSize="12" textAnchor="middle">
        total_in_icu_avg
      </text>
    </svg>
  );
}

/* ---------- page ---------- */

function Visualizations() {
  return (
    <section className={CARD + " mt-2 pb-[18px]"}>
      <div className="flex h-10 items-center border-b border-[#dddddd] pl-3">
        <MdBarChart size={24} className="text-[#212121]" />
        <h2 className="ml-[18px] text-[15px] font-bold">Dashboard Visualizations</h2>
      </div>
      <div className="px-[19px] pt-3">
        <VizForm
          id="map"
          title="average of new_in group by centroid"
          width="100%"
          description="This bubble map shows average of new_in group by centroid"
        />
        <div className="mt-[55px] mb-[72px] flex">
          <BubbleMap />
          <ColorBar />
        </div>
        <VizForm
          id="line"
          title="average of nr_reporting, average of total_in_icu, average of total_in_ecmo group by date(ym), region"
          width="50%"
          description="This line shows average of nr_reporting, average of total_in_icu, average of total_in_ecmo group by date(ym), region"
        />
        <div className="mt-7 mb-[22px] flex">
          <LineChart />
          <ScrollBar thumb="h-[345px]" />
        </div>
        <VizForm
          id="bar"
          title="average of total_in_icu group by province"
          width="50%"
          description="This bar shows average of total_in_icu group by province"
        />
        <div className="mt-6 mb-[53px]">
          <BarChart />
        </div>
        <div className="flex justify-center">
          <SaveButton />
        </div>
      </div>
    </section>
  );
}

export default function App() {
  return (
    <div className="relative flex min-h-screen flex-col bg-[#f4f4f4] font-['Liberation_Sans',sans-serif] text-[#212121]">
      <Header />
      <Steps />
      <main className="mx-auto mt-[38px] grid w-full max-w-[1394px] grid-cols-[228px_1fr] items-start gap-[5px] pb-6">
        <Sidebar />
        <div className="min-w-0">
          <Settings />
          <Visualizations />
        </div>
      </main>
      <footer className="mt-auto flex h-[43px] items-center justify-center bg-[#388e3c] text-[15px] text-white">
        © 2021 Copyright ODE
      </footer>
      <button
        type="button"
        aria-label="Back to top"
        className="absolute right-[10px] bottom-5 flex h-10 w-10 items-center justify-center rounded-full bg-[#4caf50] text-white shadow-[0_2px_5px_0_rgba(0,0,0,0.4)]"
      >
        <MdKeyboardArrowUp size={20} />
      </button>
    </div>
  );
}
